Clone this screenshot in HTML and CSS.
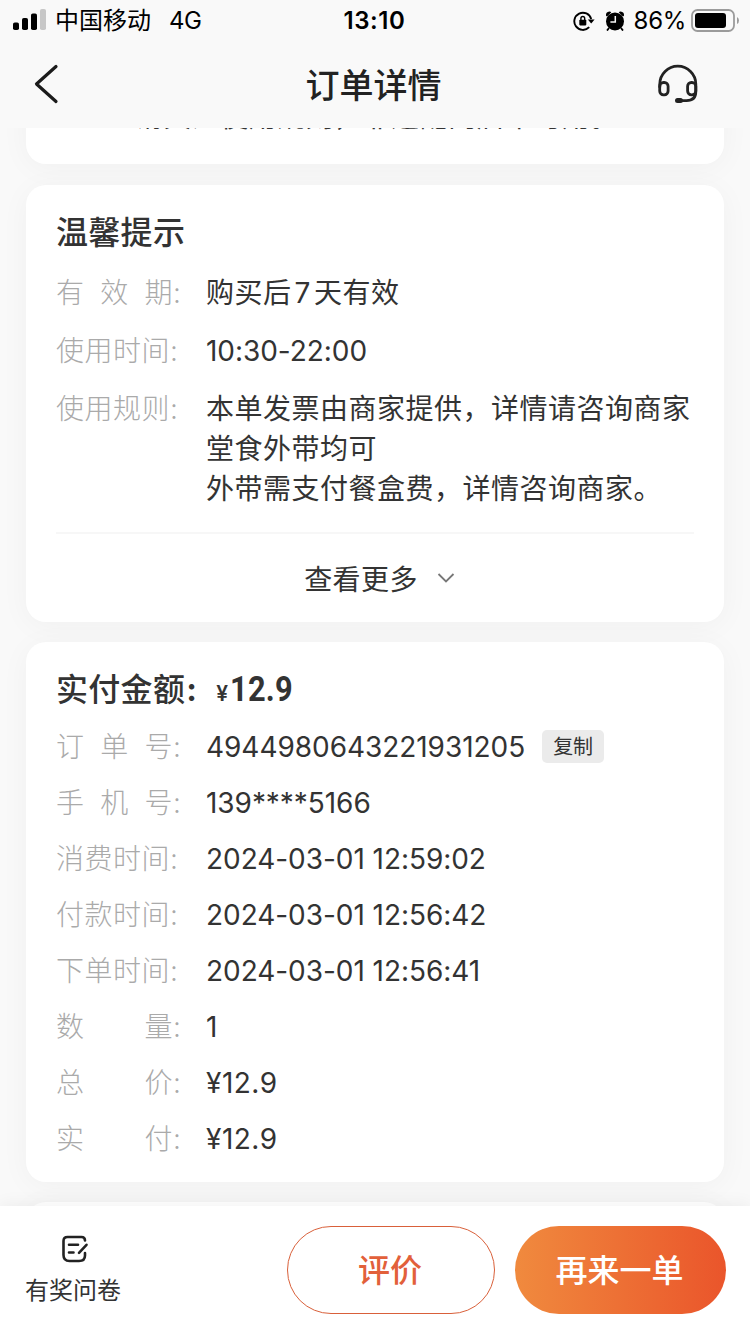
FILE: index.html
```html
<!DOCTYPE html>
<html lang="zh-CN">
<head>
    <meta charset="UTF-8">
    <meta name="viewport" content="width=device-width, initial-scale=1.0">
    <title>订单详情</title>
    <link rel="stylesheet" href="styles.css">
</head>
<body>

<div class="page">
    <!-- 状态栏 -->
    <div class="status-bar">
        <div class="status-left">
            <svg class="signal" width="34" height="22" viewBox="0 0 34 22">
                <rect x="0" y="13.5" width="6" height="7.5" rx="1.8"/>
                <rect x="9" y="9" width="6" height="12" rx="1.8"/>
                <rect x="18" y="4.5" width="6" height="16.5" rx="1.8"/>
                <rect x="27" y="0" width="6" height="21" rx="1.8" fill="#c7c7c7"/>
            </svg>
            <span class="carrier">中国移动</span>
            <span class="network">4G</span>
        </div>
        <div class="status-time">13:10</div>
        <div class="status-right">
            <svg width="22" height="22" viewBox="0 0 22 22">
                <path d="M16.2 17.2 A8.6 8.6 0 1 1 18.2 9" fill="none" stroke="#000" stroke-width="1.9"/>
                <path d="M14.8 9.4 H21.6 L18.2 13.6 Z"/>
                <rect x="6.3" y="9.8" width="7" height="5.6" rx="0.8"/>
                <path d="M7.9 10 V8.4 a1.9 1.9 0 0 1 3.8 0 V10" fill="none" stroke="#000" stroke-width="1.4"/>
            </svg>
            <svg class="alarm" width="20" height="20" viewBox="0 0 20 20">
                <circle cx="10" cy="10.4" r="9"/>
                <path d="M1 4.8 Q0.6 1 4.4 0.6 Q5.8 0.6 6.2 1.4 L2 5.4 Z M19 4.8 Q19.4 1 15.6 0.6 Q14.2 0.6 13.8 1.4 L18 5.4 Z"/>
                <path d="M4 17 L2 19.6 M16 17 L18 19.6" stroke="#000" stroke-width="1.8"/>
                <path d="M10.3 5 V11 H5.4" fill="none" stroke="#f9f9f9" stroke-width="1.5"/>
            </svg>
            <span class="percent">86%</span>
            <svg width="48" height="24" viewBox="0 0 48 24">
                <rect x="1" y="1" width="42" height="21" rx="5.5" fill="none" stroke="#9b9b9b" stroke-width="1.8"/>
                <rect x="4" y="4" width="31" height="15" rx="3"/>
                <path d="M46 8 q2 1 2 3.5 t-2 3.5 z" fill="#9b9b9b"/>
            </svg>
        </div>
    </div>

    <!-- 导航栏 -->
    <div class="nav-bar">
        <svg class="back" width="26" height="40" viewBox="0 0 26 40">
            <path d="M22 2.5 L2.5 20 L22 37.5" fill="none" stroke="#1b1b1b" stroke-width="3.2" stroke-linecap="round" stroke-linejoin="round"/>
        </svg>
        <h1>订单详情</h1>
        <svg class="service" width="40" height="40" viewBox="0 0 40 40" fill="none" stroke="#222" stroke-width="2.8" stroke-linecap="round">
            <path d="M1.8 23 V20 A18 17.8 0 0 1 37.8 20 V27.5 Q37.8 36.6 28.5 36.6 H20"/>
            <rect x="1.7" y="18.5" width="8.4" height="12.4" rx="3.8"/>
            <rect x="29.6" y="18.5" width="8.2" height="12.4" rx="3.8"/>
            <path d="M19.5 36.6 H22.5" stroke-width="5"/>
        </svg>
    </div>

    <!-- 订单内容 -->
    <div class="content">
        <div class="card notice-card">
            <p class="notice">请关注使用规则，非适配门店不可用。</p>
        </div>

        <div class="card tips-card">
            <h2>温馨提示</h2>
            <div class="row">
                <span class="label"><span class="spread">有效期</span>:</span>
                <span class="value">购买后<span class="seven">7</span>天有效</span>
            </div>
            <div class="row">
                <span class="label">使用时间:</span>
                <span class="value digits">10:30-22:00</span>
            </div>
            <div class="row">
                <span class="label">使用规则:</span>
                <span class="value">本单发票由商家提供，详情请咨询商家<br>堂食外带均可<br>外带需支付餐盒费，详情咨询商家。</span>
            </div>
            <div class="more">
                <span>查看更多</span>
                <svg width="18" height="12" viewBox="0 0 18 12">
                    <path d="M1.5 2 L9 9.5 L16.5 2" fill="none" stroke="#777" stroke-width="1.8"/>
                </svg>
            </div>
        </div>

        <div class="card order-card">
            <h2>实付金额<span class="colon">:</span><span class="yen">¥</span><span class="price">12.9</span></h2>
            <div class="row">
                <span class="label"><span class="spread">订单号</span>:</span>
                <span class="value digits">4944980643221931205</span>
                <span class="copy">复制</span>
            </div>
            <div class="row">
                <span class="label"><span class="spread">手机号</span>:</span>
                <span class="value digits">139****5166</span>
            </div>
            <div class="row">
                <span class="label">消费时间:</span>
                <span class="value digits">2024-03-01 12:59:02</span>
            </div>
            <div class="row">
                <span class="label">付款时间:</span>
                <span class="value digits">2024-03-01 12:56:42</span>
            </div>
            <div class="row">
                <span class="label">下单时间:</span>
                <span class="value digits">2024-03-01 12:56:41</span>
            </div>
            <div class="row">
                <span class="label"><span class="spread">数量</span>:</span>
                <span class="value">1</span>
            </div>
            <div class="row">
                <span class="label"><span class="spread">总价</span>:</span>
                <span class="value amount">¥12.9</span>
            </div>
            <div class="row">
                <span class="label"><span class="spread">实付</span>:</span>
                <span class="value amount">¥12.9</span>
            </div>
        </div>

        <div class="card next-card"></div>
    </div>

    <!-- 底部操作栏 -->
    <div class="footer">
        <div class="survey">
            <svg width="28" height="28" viewBox="0 0 28 28" fill="none" stroke="#222" stroke-width="2.6" stroke-linecap="round" stroke-linejoin="round">
                <path d="M24 5.5 Q24 2 20.5 2 H6.5 Q2.5 2 2.5 6 V20 Q2.5 26 8.5 26 H18 Q24 26 24 20.5 V18"/>
                <path d="M8 9.8 H17 M8 17.5 H12.5 M18 17.8 L25.5 9.8"/>
            </svg>
            <span>有奖问卷</span>
        </div>
        <button class="review">评价</button>
        <button class="again">再来一单</button>
    </div>
</div>

</body>
</html>
```

FILE: styles.css
```css
body {
    margin: 0;
    font-family: Inter, 'Noto Sans CJK SC', sans-serif;
    background-color: #f9f9f9;
    color: #333;
}

.page {
    width: 750px;
    height: 1334px;
    display: flex;
    flex-direction: column;
    overflow: hidden;
}

svg {
    display: block;
    flex-shrink: 0;
}

/* 状态栏 */
.status-bar {
    height: 40px;
    display: grid;
    grid-template-columns: 1fr auto 1fr;
    align-items: center;
    box-sizing: border-box;
    padding: 1px 11px 0 13px;
    font-size: 24px;
    line-height: 39px;
    color: #000;
}

.status-left, .status-right {
    display: flex;
    align-items: center;
}

.status-right {
    justify-content: flex-end;
}

.signal {
    margin: 0 8px 2px 0;
}

.carrier {
    margin-right: 18px;
}

.network {
    letter-spacing: -0.5px;
}

.status-time {
    font-weight: 600;
    letter-spacing: 0.6px;
    margin-right: 3px;
}

.alarm {
    margin: 0 9px 0 10px;
}

.percent {
    margin-right: 5px;
    letter-spacing: -0.3px;
}

/* 导航栏 */
.nav-bar {
    height: 88px;
    flex-shrink: 0;
    display: grid;
    grid-template-columns: 1fr auto 1fr;
    align-items: center;
    padding: 0 52px 0 34px;
    box-sizing: border-box;
}

.nav-bar h1 {
    margin: 0 0 2px 15px;
    font-size: 34px;
    font-weight: 500;
    color: #222;
}

.service {
    justify-self: end;
}

/* 卡片 */
.content {
    flex: 1;
    overflow: hidden;
    display: flex;
    flex-direction: column;
    gap: 20px;
    padding: 0 26px;
}

.card {
    flex-shrink: 0;
    box-sizing: border-box;
    padding: 0 30px;
    background-color: #fff;
    border-radius: 20px;
    box-shadow: 0 4px 30px rgba(0, 0, 0, 0.04);
}

.card h2 {
    margin: 0;
    font-size: 32px;
    line-height: 48px;
    font-weight: 500;
    letter-spacing: 0.3px;
}

.notice-card {
    height: 84px;
    margin-top: -48px;
    margin-bottom: 1px;
}

.notice {
    margin: 0;
    padding: 17px 0 0 4px;
    font-size: 28px;
    line-height: 40px;
    letter-spacing: 0.5px;
    text-align: center;
}

.row {
    display: flex;
    font-size: 28px;
    line-height: 40px;
}

.label {
    display: flex;
    width: 150px;
    flex-shrink: 0;
    color: #aaa;
    font-weight: 300;
    letter-spacing: 0.5px;
    white-space: nowrap;
}

/* 短标签两端对齐 */
.spread {
    width: 117px;
    white-space: normal;
    text-align-last: justify;
}

.value {
    letter-spacing: 0.5px;
}

.digits {
    letter-spacing: -0.05px;
}

.seven {
    margin: 0 3px;
}

.tips-card {
    height: 437px;
    padding-top: 24px;
}

.tips-card .row {
    margin-top: 18px;
}

.tips-card h2 + .row {
    margin-top: 16px;
}

.more {
    display: flex;
    align-items: center;
    justify-content: center;
    gap: 19px;
    height: 87px;
    margin-top: 23px;
    padding-left: 9px;
    border-top: 2px solid #f7f7f7;
    font-size: 28px;
    letter-spacing: 0.4px;
}

.order-card {
    height: 540px;
    padding-top: 24px;
}

.order-card .row {
    margin-top: 16px;
}

.order-card h2 + .row {
    margin-top: 9px;
}

.colon {
    margin: 0 19px 0 1px;
    font-weight: 700;
}

.yen {
    font-size: 21px;
    margin-right: 2px;
    font-weight: 600;
}

.price {
    display: inline-block;
    font-family: Roboto, sans-serif;
    font-size: 35px;
    font-weight: 700;
    transform: scaleX(0.88);
    transform-origin: left;
}

.copy {
    width: 62px;
    height: 33px;
    margin: 3px 0 0 17px;
    border-radius: 5px;
    background-color: #ebebeb;
    font-size: 20px;
    line-height: 34px;
    text-align: center;
}

.next-card {
    height: 200px;
}

/* 底部操作栏 */
.footer {
    height: 128px;
    flex-shrink: 0;
    display: flex;
    box-sizing: border-box;
    padding: 20px 24px;
    background-color: #fff;
    box-shadow: 0 -2px 16px rgba(0, 0, 0, 0.05);
    position: relative;
}

.survey {
    display: flex;
    flex-direction: column;
    align-items: center;
    width: 98px;
    padding-top: 9px;
    font-size: 24px;
    line-height: 36px;
}

.survey svg {
    margin: 0 0 10px 4px;
}

.footer button {
    height: 88px;
    border-radius: 44px;
    font-family: inherit;
    font-size: 32px;
    font-weight: 500;
    padding: 0 2px 4px 0;
}

.review {
    width: 208px;
    margin-left: 165px;
    border: 1px solid #d9603a;
    background-color: #fff;
    color: #e2603a;
}

.again {
    width: 211px;
    margin-left: 20px;
    border: none;
    background: linear-gradient(90deg, #f08a3e, #ea552b);
    color: #fff;
}
```
